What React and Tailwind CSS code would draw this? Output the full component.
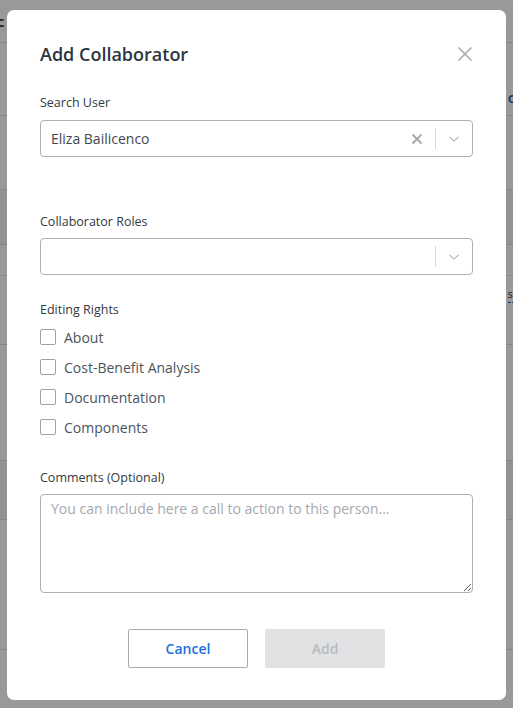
import React, { useState } from 'react';

const rights = ['About', 'Cost-Benefit Analysis', 'Documentation', 'Components'];

const Chevron = () => (
    <svg width="14" height="14" viewBox="0 0 20 20" fill="none" stroke="#b3b9bf" strokeWidth="1.6" strokeLinecap="round">
        <path d="M4 7.5 L10 13 L16 7.5" />
    </svg>
);

const ClearIcon = () => (
    <svg width="12" height="12" viewBox="0 0 12 12" fill="none" stroke="#a3a8ad" strokeWidth="1.8" strokeLinecap="round">
        <path d="M2 2 L10 10 M10 2 L2 10" />
    </svg>
);

// table behind the modal, only its edges show
const Background = () => (
    <div className="flex flex-col w-full bg-white text-[15px] text-[#1f2d3d]">
        <div className="h-[43px] border-b border-[#dcdcdc] flex items-center font-semibold text-[#14233a]">
            <span className="-ml-[3px]">c</span>
        </div>
        <div className="h-[73px] border-b border-[#dcdcdc] flex items-end justify-end pb-[8px]">
            <span className="text-[#1c5fb8] font-semibold -mr-[4px] leading-[20px]">o</span>
        </div>
        <div className="h-[74px] border-b border-[#e6e6e6]" />
        <div className="h-[55px] bg-[#f4f4f4] border-b border-[#dcdcdc] flex items-center pl-[12px] text-[#5a4420]">E</div>
        <div className="h-[31px] border-b border-[#e6e6e6]" />
        <div className="h-[37px] flex items-center justify-between pl-[12px]">
            <span className="text-[#5a4420]">j</span>
            <span className="text-[11px] border-b border-dashed border-[#1c5fb8] -mr-[6px]">se</span>
        </div>
        <div className="h-[32px] border-b border-[#dcdcdc]" />
        <div className="h-[115px]" />
        <div className="h-[60px] bg-[#f4f4f4] border-y border-[#dcdcdc] flex items-center pl-[12px] text-[#3a2a40]">F</div>
        <div className="h-[130px] border-b border-[#dcdcdc] flex flex-col justify-center pl-[12px]">
            <span className="text-[#3a2a40] leading-[18px]">E</span>
            <span className="text-[12px] underline leading-[17px]">s</span>
            <span className="text-[11px] text-[#7a1f2f] leading-[17px]">/</span>
        </div>
        <div className="h-[58px]" />
    </div>
);

export default function App() {
    const [user, setUser] = useState('Eliza Bailicenco');
    const [checked, setChecked] = useState({});

    return (
        <div className="relative w-[513px] h-[708px] overflow-hidden" style={{ fontFamily: '"Open Sans", "Noto Sans", sans-serif' }}>
            <Background />

            {/* overlay + modal */}
            <div className="absolute inset-0 bg-black/40 pt-[10px] pl-[7px]">
                <div className="w-[499px] h-[690px] bg-white rounded-[7px] px-[33px] pt-[30px] pb-[32px] flex flex-col">
                    <div className="flex items-center justify-between h-[28px]">
                        <h2 className="text-[18px] font-semibold text-[#2b3640] leading-[28px]">Add Collaborator</h2>
                        <button className="text-[#a8adb3] mr-[1px]">
                            <svg width="14" height="14" viewBox="0 0 14 14" fill="none" stroke="currentColor" strokeWidth="1.7" strokeLinecap="round">
                                <path d="M1 1 L13 13 M13 1 L1 13" />
                            </svg>
                        </button>
                    </div>

                    <label className="mt-[26px] text-[12.5px] leading-[18px] text-[#333a40]">Search User</label>
                    <div className="mt-[8px] h-[37px] border border-[#a9b1b8] rounded-[4px] flex items-center pl-[10px]">
                        <span className="flex-1 text-[14px] text-[#3f4850]">{user}</span>
                        <button className="px-[12px]" onClick={() => setUser('')}><ClearIcon /></button>
                        <span className="w-px h-[21px] bg-[#d2d6da]" />
                        <span className="px-[11px]"><Chevron /></span>
                    </div>

                    <label className="mt-[56px] text-[12.5px] leading-[18px] text-[#333a40]">Collaborator Roles</label>
                    <div className="mt-[7px] h-[37px] border border-[#a9b1b8] rounded-[4px] flex items-center justify-end">
                        <span className="w-px h-[21px] bg-[#d2d6da]" />
                        <span className="px-[11px]"><Chevron /></span>
                    </div>

                    <label className="mt-[26px] text-[12.5px] leading-[18px] text-[#333a40]">Editing Rights</label>
                    <div className="mt-[3px] flex flex-col">
                        {rights.map((r) => (
                            <label key={r} className="h-[30px] flex items-center gap-[8px] cursor-pointer">
                                <input
                                    type="checkbox"
                                    checked={!!checked[r]}
                                    onChange={() => setChecked({ ...checked, [r]: !checked[r] })}
                                    className="appearance-none w-[16px] h-[16px] border border-[#9aa3ab] rounded-[2px] bg-white"
                                />
                                <span className="text-[14px] text-[#4a545e]">{r}</span>
                            </label>
                        ))}
                    </div>

                    <label className="mt-[27px] text-[12.5px] leading-[18px] text-[#333a40]">Comments (Optional)</label>
                    <textarea
                        placeholder="You can include here a call to action to this person..."
                        className="mt-[7px] h-[99px] border border-[#a9b1b8] rounded-[4px] px-[10px] py-[4px] text-[14px] leading-[20px] text-[#3f4850] placeholder:text-[#a3a9ae] outline-none"
                    />

                    <div className="mt-[36px] flex justify-center gap-[17px]">
                        <button className="w-[120px] h-[39px] border border-[#a3adb6] rounded-[2px] text-[14px] font-semibold text-[#1a6fe0]">Cancel</button>
                        <button disabled className="w-[120px] h-[39px] bg-[#e1e2e4] rounded-[2px] text-[14px] font-semibold text-[#b9bbbe]">Add</button>
                    </div>
                </div>
            </div>
        </div>
    );
}
